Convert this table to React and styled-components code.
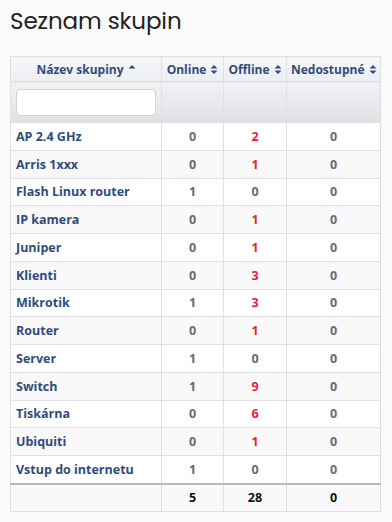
import React from "react";
import styled, { createGlobalStyle } from "styled-components";

const Global = createGlobalStyle`
  html, body { margin: 0; padding: 0; background: #fafafa; }
  body { font-family: "Open Sans", "Noto Sans", sans-serif; }
`;

const Page = styled.div`
  padding: 6px 12px 12px 10px;
  width: 392px;
  box-sizing: border-box;
`;

const Title = styled.h1`
  margin: 0 0 20px 0;
  font-family: "Poppins", "Lato", "Inter", sans-serif;
  font-weight: 400;
  font-size: 23px;
  line-height: 30px;
  letter-spacing: -0.1px;
  color: #222;
`;

const Table = styled.table`
  border-collapse: collapse;
  width: 370px;
  background: #fff;
  border: 1px solid #dee0e4;
  table-layout: fixed;
  font-size: 12px;
`;

const Th = styled.th`
  border: 1px solid #dee0e4;
  background: linear-gradient(#f6f7f9, #eceef1);
  color: #2f4c7c;
  font-weight: 700;
  font-size: 12px;
  height: 24px;
  padding: 0 4px;
  text-align: center;
  white-space: nowrap;
`;

const FilterCell = styled.td`
  border: 1px solid #dee0e4;
  background: linear-gradient(#f1f2f4, #dfe1e5);
  height: 40px;
  padding: 0 5px;
`;

const Input = styled.input`
  display: block;
  width: 100%;
  box-sizing: border-box;
  height: 27px;
  border: 1px solid #cfd2d7;
  border-radius: 4px;
  background: #fff;
`;

const Row = styled.tr`
  background: ${(p) => (p.$odd ? "#f9f9f9" : "#fff")};
`;

const Name = styled.td`
  border: 1px solid #dee0e4;
  height: 26.75px;
  padding: 0 5px;
  color: #2f4c7c;
  font-weight: 700;
  font-size: 12.5px;
`;

const Num = styled.td`
  border: 1px solid #dee0e4;
  text-align: center;
  font-weight: 700;
  font-size: 12.5px;
  color: ${(p) => (p.$red ? "#e3243d" : "#666b72")};
`;

const FootRow = styled.tr`
  background: #f9f9f9;
`;

const FootCell = styled.td`
  border: 1px solid #dee0e4;
  border-top: 2px solid #b8b9bb;
  height: 24px;
  text-align: center;
  font-weight: 700;
  font-size: 12.5px;
  color: #111;
`;

const Icon = styled.svg`
  display: inline-block;
  vertical-align: middle;
  margin-left: 4px;
  margin-top: -2px;
`;

const SortBoth = () => (
  <Icon width="8" height="11" viewBox="0 0 8 11">
    <path d="M0.5 4.6 L4 1 L7.5 4.6 Z M0.5 6.4 L4 10 L7.5 6.4 Z" fill="#2f4c7c" />
  </Icon>
);
const SortUp = () => (
  <Icon width="8" height="11" viewBox="0 0 8 11">
    <path d="M0.5 4.6 L4 1 L7.5 4.6 Z" fill="#2f4c7c" />
  </Icon>
);

const data = [
  ["AP 2.4 GHz", 0, 2, 0],
  ["Arris 1xxx", 0, 1, 0],
  ["Flash Linux router", 1, 0, 0],
  ["IP kamera", 0, 1, 0],
  ["Juniper", 0, 1, 0],
  ["Klienti", 0, 3, 0],
  ["Mikrotik", 1, 3, 0],
  ["Router", 0, 1, 0],
  ["Server", 1, 0, 0],
  ["Switch", 1, 9, 0],
  ["Tiskárna", 0, 6, 0],
  ["Ubiquiti", 0, 1, 0],
  ["Vstup do internetu", 1, 0, 0],
];

export default function App() {
  return (
    <Page>
      <Global />
      <Title>Seznam skupin</Title>
      <Table>
        <colgroup>
          <col style={{ width: 151 }} />
          <col style={{ width: 62 }} />
          <col style={{ width: 63 }} />
          <col style={{ width: 94 }} />
        </colgroup>
        <thead>
          <tr>
            <Th>Název skupiny<SortUp /></Th>
            <Th>Online<SortBoth /></Th>
            <Th>Offline<SortBoth /></Th>
            <Th>Nedostupné<SortBoth /></Th>
          </tr>
          <tr>
            <FilterCell><Input type="text" /></FilterCell>
            <FilterCell />
            <FilterCell />
            <FilterCell />
          </tr>
        </thead>
        <tbody>
          {data.map((r, i) => (
            <Row key={r[0]} $odd={i % 2 === 1}>
              <Name>{r[0]}</Name>
              <Num>{r[1]}</Num>
              <Num $red={r[2] > 0}>{r[2]}</Num>
              <Num>{r[3]}</Num>
            </Row>
          ))}
        </tbody>
        <tfoot>
          <FootRow>
            <FootCell />
            <FootCell>5</FootCell>
            <FootCell>28</FootCell>
            <FootCell>0</FootCell>
          </FootRow>
        </tfoot>
      </Table>
    </Page>
  );
}
